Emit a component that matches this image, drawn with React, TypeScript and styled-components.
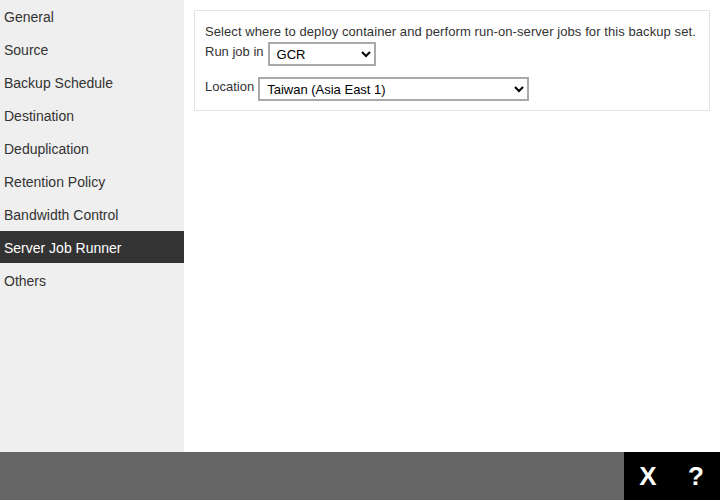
import { createGlobalStyle } from 'styled-components'
import styled from 'styled-components'

const GlobalStyle = createGlobalStyle`
  html, body {
    margin: 0;
    padding: 0;
    background: #fff;
  }
  body {
    font-family: "Liberation Sans", Arial, sans-serif;
    color: #333;
  }
`

const Page = styled.div`
  width: 720px;
  height: 500px;
  display: flex;
  flex-direction: column;
  overflow: hidden;
`

const Body = styled.div`
  flex: 1;
  display: flex;
  min-height: 0;
`

const Sidebar = styled.nav`
  width: 184px;
  background: #efefef;
  display: flex;
  flex-direction: column;
`

const MenuItem = styled.div<{ $active?: boolean }>`
  height: 32px;
  margin-bottom: 1px;
  padding: 1px 0 0 4px;
  box-sizing: border-box;
  display: flex;
  align-items: center;
  font-size: 14px;
  color: ${(p) => (p.$active ? '#fff' : '#333')};
  background: ${(p) => (p.$active ? '#333' : 'transparent')};
  cursor: pointer;
`

const Content = styled.main`
  flex: 1;
  padding: 10px;
`

const Card = styled.section`
  border: 1px solid #e4e4e4;
  padding: 13px 10px 9px;
  font-size: 13px;
  line-height: 16px;
`

const Intro = styled.div`
  margin-bottom: 2px;
  letter-spacing: 0.08px;
`

const Row = styled.div`
  display: flex;
  align-items: flex-start;
  margin-bottom: 11px;
  &:last-child {
    margin-bottom: 0;
  }
`

const Label = styled.label`
  margin-top: 2px;
  margin-right: 4px;
`

const Select = styled.select<{ $width: number }>`
  width: ${(p) => p.$width}px;
  height: 24px;
  border: 2px solid #a9a9a9;
  border-radius: 0;
  background: #fff;
  padding: 0 4px 0 3px;
  font-family: "Liberation Sans", Arial, sans-serif;
  font-size: 13px;
  color: #000;
  outline: none;
`

const Footer = styled.footer`
  height: 48px;
  display: flex;
  background: #666;
`

const Spacer = styled.div`
  flex: 1;
`

const ActionGroup = styled.div`
  display: flex;
  background: #000;
`

const ActionButton = styled.button`
  width: 48px;
  height: 48px;
  border: 0;
  padding: 0;
  background: transparent;
  color: #fff;
  font-family: "Liberation Sans", Arial, sans-serif;
  font-weight: bold;
  font-size: 26px;
  line-height: 48px;
  cursor: pointer;
`

const menu = [
  'General',
  'Source',
  'Backup Schedule',
  'Destination',
  'Deduplication',
  'Retention Policy',
  'Bandwidth Control',
  'Server Job Runner',
  'Others',
]

export default function App() {
  return (
    <Page>
      <GlobalStyle />
      <Body>
        <Sidebar>
          {menu.map((m) => (
            <MenuItem key={m} $active={m === 'Server Job Runner'}>
              {m}
            </MenuItem>
          ))}
        </Sidebar>
        <Content>
          <Card>
            <Intro>Select where to deploy container and perform run-on-server jobs for this backup set.</Intro>
            <Row>
              <Label>Run job in</Label>
              <Select $width={108} defaultValue="GCR">
                <option value="GCR">GCR</option>
                <option value="Local">Local</option>
              </Select>
            </Row>
            <Row>
              <Label>Location</Label>
              <Select $width={271} defaultValue="asia-east1">
                <option value="asia-east1">Taiwan (Asia East 1)</option>
                <option value="asia-east2">Hong Kong (Asia East 2)</option>
              </Select>
            </Row>
          </Card>
        </Content>
      </Body>
      <Footer>
        <Spacer />
        <ActionGroup>
          <ActionButton>X</ActionButton>
          <ActionButton>?</ActionButton>
        </ActionGroup>
      </Footer>
    </Page>
  )
}
